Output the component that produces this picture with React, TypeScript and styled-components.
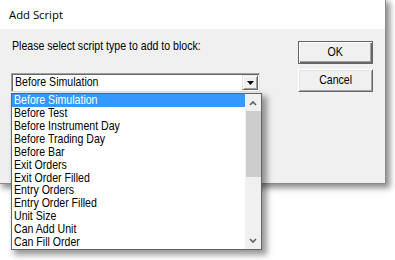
import React from "react";
import styled, { createGlobalStyle } from "styled-components";

const Global = createGlobalStyle`
  html, body { margin: 0; padding: 0; background: #ffffff; }
  body { width: 395px; height: 260px; overflow: hidden; }
`;

const Page = styled.div`
  width: 395px;
  height: 260px;
  position: relative;
`;

const Window = styled.div`
  width: 385px;
  height: 183px;
  display: flex;
  flex-direction: column;
  background: #f0f0f0;
  border-right: 1px solid #8a8a8a;
  border-bottom: 1px solid #8a8a8a;
  box-shadow: 3px 3px 6px 1px rgba(0, 0, 0, 0.45);
  position: relative;
`;

const TitleBar = styled.div`
  height: 29px;
  flex: none;
  background: #ffffff;
  display: flex;
  align-items: center;
  padding-left: 9px;
  font-family: "Open Sans", "Noto Sans", "Liberation Sans", sans-serif;
  font-size: 11.3px;
  color: #000;
`;

const Body = styled.div`
  flex: 1;
  display: flex;
  padding: 12px 0 0 11px;
  font-family: "Liberation Sans", Arial, sans-serif;
  font-size: 12.6px;
  color: #000;
`;

/* The dialog's classic UI font is tall and narrow */
const Narrow = styled.span<{ $center?: boolean }>`
  display: inline-block;
  white-space: nowrap;
  transform: scaleX(0.84);
  transform-origin: ${(p) => (p.$center ? "center" : "left")} center;
`;

const LeftCol = styled.div`
  width: 249px;
  display: flex;
  flex-direction: column;
`;

const Label = styled.div`
  margin: -2px 0 0 1px;
  height: 15px;
  line-height: 15px;
`;

const Combo = styled.div`
  position: relative;
  margin-top: 19px;
  height: 19px;
  box-sizing: border-box;
  background: #fff;
  border: 1px solid;
  border-color: #a0a0a0 #e3e3e3 #e3e3e3 #a0a0a0;
  box-shadow: inset 1px 1px 0 #696969;
  display: flex;
  align-items: center;
`;

const ComboText = styled.div`
  flex: 1;
  padding-left: 3px;
  line-height: 15px;
`;

const DropButton = styled.div`
  width: 16px;
  height: 15px;
  margin-right: 1px;
  box-sizing: border-box;
  background: #f0f0f0;
  border: 1px solid;
  border-color: #e3e3e3 #696969 #696969 #e3e3e3;
  box-shadow: inset 1px 1px 0 #fff, inset -1px -1px 0 #a0a0a0;
  display: flex;
  align-items: center;
  justify-content: center;
`;

const List = styled.div`
  position: absolute;
  top: 19px;
  left: -1px;
  width: 251px;
  height: 157px;
  box-sizing: border-box;
  background: #fff;
  border: 1px solid #646464;
  box-shadow: 4px 4px 6px 1px rgba(0, 0, 0, 0.4);
  display: flex;
  z-index: 2;
`;

const Rows = styled.div`
  flex: 1;
  display: flex;
  flex-direction: column;
`;

const Row = styled.div<{ $selected?: boolean }>`
  height: 13px;
  line-height: 13px;
  padding-left: 2px;
  white-space: nowrap;
  overflow: hidden;
  background: ${(p) => (p.$selected ? "#3399ff" : "transparent")};
  color: ${(p) => (p.$selected ? "#ffffff" : "#000000")};
`;

const Scrollbar = styled.div`
  width: 16px;
  flex: none;
  background: #f0f0f0;
  display: flex;
  flex-direction: column;
`;

const ArrowBox = styled.div`
  height: 17px;
  flex: none;
  display: flex;
  align-items: center;
  justify-content: center;
`;

const Track = styled.div`
  flex: 1;
  display: flex;
  flex-direction: column;
`;

const Thumb = styled.div`
  height: 66px;
  margin: 0 0 0 1px;
  background: #cdcdcd;
`;

const RightCol = styled.div`
  margin-left: 38px;
  width: 75px;
  display: flex;
  flex-direction: column;
  gap: 5px;
`;

const Button = styled.div<{ $default?: boolean }>`
  height: 23px;
  box-sizing: border-box;
  background: #f0f0f0;
  display: flex;
  align-items: center;
  justify-content: center;
  border: 1px solid;
  border-color: ${(p) =>
    p.$default ? "#646464" : "#ffffff #696969 #696969 #ffffff"};
  box-shadow: ${(p) =>
    p.$default
      ? "inset 1px 1px 0 #fff, inset -1px -1px 0 #696969, inset -2px -2px 0 #a0a0a0"
      : "inset 1px 1px 0 #e3e3e3, inset -1px -1px 0 #a0a0a0"};
  line-height: 15px;
`;

const items = [
  "Before Simulation",
  "Before Test",
  "Before Instrument Day",
  "Before Trading Day",
  "Before Bar",
  "Exit Orders",
  "Exit Order Filled",
  "Entry Orders",
  "Entry Order Filled",
  "Unit Size",
  "Can Add Unit",
  "Can Fill Order",
];

const Chevron = ({ up }: { up?: boolean }) => (
  <svg width="8" height="6" viewBox="0 0 8 6">
    <path
      d={up ? "M1 5 L4 2 L7 5" : "M1 1 L4 4 L7 1"}
      fill="none"
      stroke="#606060"
      strokeWidth="1.6"
    />
  </svg>
);

export default function App() {
  return (
    <Page>
      <Global />
      <Window>
        <TitleBar>Add Script</TitleBar>
        <Body>
          <LeftCol>
            <Label>
              <Narrow>Please select script type to add to block:</Narrow>
            </Label>
            <Combo>
              <ComboText>
                <Narrow>Before Simulation</Narrow>
              </ComboText>
              <DropButton>
                <svg width="7" height="4" viewBox="0 0 7 4">
                  <path d="M0 0 H7 L3.5 4 Z" fill="#000" />
                </svg>
              </DropButton>
              <List>
                <Rows>
                  {items.map((it, i) => (
                    <Row key={it} $selected={i === 0}>
                      <Narrow>{it}</Narrow>
                    </Row>
                  ))}
                </Rows>
                <Scrollbar>
                  <ArrowBox>
                    <Chevron up />
                  </ArrowBox>
                  <Track>
                    <Thumb />
                  </Track>
                  <ArrowBox>
                    <Chevron />
                  </ArrowBox>
                </Scrollbar>
              </List>
            </Combo>
          </LeftCol>
          <RightCol>
            <Button $default>
              <Narrow $center>OK</Narrow>
            </Button>
            <Button>
              <Narrow $center>Cancel</Narrow>
            </Button>
          </RightCol>
        </Body>
      </Window>
    </Page>
  );
}
